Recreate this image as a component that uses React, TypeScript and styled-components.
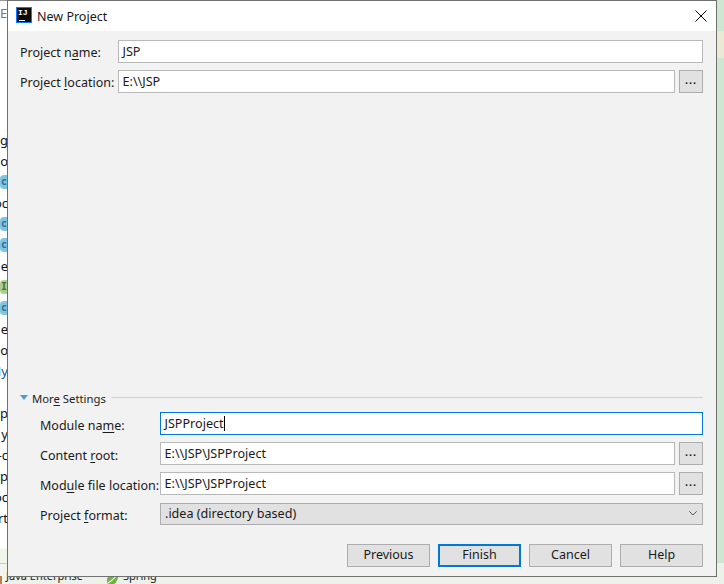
import styled, { createGlobalStyle } from "styled-components";

const GUTTER_ROWS = [
  { text: "ng" }, { text: "o" }, { badge: "c" }, { text: "oc" },
  { badge: "c" }, { badge: "c" }, { text: "e" }, { badge: "I", green: true },
  { badge: "c" }, { text: "e" }, { text: "oo" }, { text: "My", blue: true },
  { text: "" }, { text: "p" }, { text: "y" }, { text: "-c" }, { text: "rp" },
  { text: "oc" }, { text: "rt" },
];

function Mnemonic({ children }: { children: string }) {
  return <U>{children}</U>;
}

function Dots() {
  return <DotsButton>...</DotsButton>;
}

function App() {
  return (
    <Page>
      <GlobalStyle />
      <Gutter>
        <GutterTop>E:</GutterTop>
        {GUTTER_ROWS.map((r, i) => (
          <GutterItem key={i} $blue={r.blue}>
            {r.badge ? <Badge $green={r.green}>{r.badge}</Badge> : r.text}
          </GutterItem>
        ))}
      </Gutter>
      <RightStrip />
      <BottomStrip>
        <ModuleIcon />
        <BottomLabel>Java Enterprise</BottomLabel>
        <Leaf viewBox="0 0 14 14">
          <path d="M13 1C12 9 9 13 5 13 2 13 1 11 1 8 1 4 5 2 13 1z" fill="#6db33f" />
          <path d="M2 11C5 9 8 7 10 4" fill="none" stroke="#fff" strokeWidth="1.2" />
        </Leaf>
        <BottomLabel>Spring</BottomLabel>
      </BottomStrip>
      <Dialog>
        <TitleBar>
          <Logo><LogoText>IJ</LogoText><LogoBar /></Logo>
          <Title>New Project</Title>
          <Close viewBox="0 0 12 12"><path d="M.5.5l11 11M11.5.5l-11 11" /></Close>
        </TitleBar>
        <Body>
          <Form>
            <Row>
              <Label $w={98} $drop={1}>Project n<Mnemonic>a</Mnemonic>me:</Label>
              <Field>JSP</Field>
            </Row>
            <Row>
              <Label $w={98} $drop={1}>Project <Mnemonic>l</Mnemonic>ocation:</Label>
              <Field>E:\\JSP</Field>
              <Dots />
            </Row>
          </Form>
          <More>
            <SectionHead>
              <Caret />
              <SectionTitle>Mor<Mnemonic>e</Mnemonic> Settings</SectionTitle>
              <Rule />
            </SectionHead>
            <Fields>
              <Row>
                <Label $w={120} $drop={3}>Module na<Mnemonic>m</Mnemonic>e:</Label>
                <Field $focused>JSPProject<CaretBar /></Field>
              </Row>
              <Row>
                <Label $w={120} $drop={3}>Content <Mnemonic>r</Mnemonic>oot:</Label>
                <Field>E:\\JSP\JSPProject</Field>
                <Dots />
              </Row>
              <Row>
                <Label $w={120} $drop={3}>Mod<Mnemonic>u</Mnemonic>le file location:</Label>
                <Field>E:\\JSP\JSPProject</Field>
                <Dots />
              </Row>
              <Row>
                <Label $w={120} $drop={3}>Project <Mnemonic>f</Mnemonic>ormat:</Label>
                <Select>
                  .idea (directory based)
                  <Chevron viewBox="0 0 8 5"><path d="M.3.3L4 4 7.7.3" /></Chevron>
                </Select>
              </Row>
            </Fields>
          </More>
          <Buttons>
            <Button>Previous</Button>
            <Button $primary>Finish</Button>
            <Button>Cancel</Button>
            <Button>Help</Button>
          </Buttons>
        </Body>
      </Dialog>
    </Page>
  );
}

export default App;

const GlobalStyle = createGlobalStyle`
  * {
    box-sizing: border-box;
  }
  body {
    margin: 0;
    font-family: "Noto Sans", "Open Sans", sans-serif;
    font-size: 13px;
    color: #1a1a1a;
  }
`;

const Page = styled.div`
  position: relative;
  width: 724px;
  height: 584px;
  overflow: hidden;
  display: flex;
  justify-content: space-between;
  background: #ecf1ea;
`;

const Gutter = styled.div`
  position: relative;
  flex: 0 0 8px;
  display: flex;
  flex-direction: column;
  height: 584px;
  padding-top: 128px;
  overflow: hidden;
  border-top: 1px solid #9a9a9a;
  background: linear-gradient(
    #fff 0,
    #fff 547px,
    #eef7e8 548px,
    #eef7e8 562px,
    #c8cbc6 562px,
    #c8cbc6 563px,
    #f3f5f1 563px
  );
`;

const GutterTop = styled.div`
  position: absolute;
  left: 0;
  top: 3px;
  font-size: 13px;
  color: #777;
`;

const GutterItem = styled.div<{ $blue?: boolean }>`
  flex: 0 0 21px;
  display: flex;
  justify-content: flex-end;
  align-items: center;
  font-size: 13px;
  white-space: nowrap;
  color: ${(p) => (p.$blue ? "#1c4f9c" : "#111")};
`;

const Badge = styled.span<{ $green?: boolean }>`
  display: flex;
  flex: 0 0 8px;
  height: 14px;
  padding-left: 1px;
  align-items: center;
  border-radius: 4px 0 0 4px;
  background: ${(p) => (p.$green ? "#a9d08e" : "#7cc6e4")};
  color: ${(p) => (p.$green ? "#4f6b3d" : "#3c6a87")};
  font-family: "DejaVu Sans Mono", monospace;
  font-size: 10px;
  font-weight: 700;
`;

const RightStrip = styled.div`
  flex: 0 0 8px;
  height: 563px;
  background: linear-gradient(
    #cfe6d2 0,
    #cfe6d2 31px,
    #ece8d6 31px,
    #ece8d6 58px,
    #cfe6d2 58px
  );
`;

const BottomStrip = styled.div`
  position: absolute;
  left: 0;
  top: 566px;
  display: flex;
  align-items: center;
  height: 20px;
`;

const ModuleIcon = styled.span`
  width: 2px;
  height: 9px;
  margin: 8px 4px 0 0;
  background: #b8834a;
`;

const BottomLabel = styled.span`
  font-size: 11px;
  line-height: 20px;
  color: #222;
`;

const Leaf = styled.svg`
  width: 14px;
  height: 14px;
  margin: 6px 3px 0 23px;
`;

const Dialog = styled.div`
  position: absolute;
  left: 7px;
  top: 0;
  width: 710px;
  height: 577px;
  display: flex;
  flex-direction: column;
  border: 1px solid #707070;
  background: #f2f2f2;
`;

const TitleBar = styled.div`
  display: flex;
  align-items: center;
  height: 30px;
  padding: 0 9px 0 8px;
  background: #fff;
`;

const Logo = styled.div`
  position: relative;
  width: 16px;
  height: 16px;
  margin-bottom: 2px;
  background: #0a0a0a;
  border: 1px solid #087cfa;
`;

const LogoText = styled.span`
  display: block;
  padding: 1px 0 0 1px;
  font-family: "Liberation Mono", monospace;
  font-size: 8px;
  font-weight: 700;
  line-height: 8px;
  color: #fff;
`;

const LogoBar = styled.span`
  position: absolute;
  left: 2px;
  bottom: 1px;
  width: 6px;
  height: 1px;
  background: #fff;
`;

const Title = styled.span`
  margin-left: 5px;
  font-size: 12.5px;
  color: #1a1a1a;
`;

const Close = styled.svg`
  width: 12px;
  height: 12px;
  margin-left: auto;
  fill: none;
  stroke: #000;
  stroke-width: 1;
`;

const Body = styled.div`
  flex: 1;
  display: flex;
  flex-direction: column;
  padding: 9px 13px 9px 12px;
`;

const Form = styled.div`
  display: flex;
  flex-direction: column;
  gap: 7px;
`;

const Row = styled.div`
  display: flex;
  align-items: center;
  gap: 4px;
  height: 23px;
`;

const Label = styled.label<{ $w: number; $drop: number }>`
  flex: 0 0 ${(p) => p.$w}px;
  margin-right: -4px;
  padding-top: ${(p) => p.$drop}px;
  font-size: 12.5px;
  white-space: nowrap;
  color: #1a1a1a;
`;

const U = styled.span`
  text-decoration: underline;
  text-underline-offset: 2px;
`;

const Field = styled.div<{ $focused?: boolean }>`
  flex: 1;
  display: flex;
  align-items: center;
  height: 23px;
  padding-left: 3.5px;
  background: #fff;
  border: 1px solid ${(p) => (p.$focused ? "#0078d7" : "#b9b9b9")};
  font-size: 12.6px;
  color: #1a1a1a;
`;

const CaretBar = styled.span`
  width: 1px;
  height: 15px;
  background: #000;
`;

const DotsButton = styled.div`
  flex: 0 0 24px;
  height: 23px;
  text-align: center;
  line-height: 19px;
  background: #e1e1e1;
  border: 1px solid #adadad;
  font-family: "Liberation Sans", sans-serif;
  font-size: 11px;
  font-weight: 700;
  letter-spacing: 1px;
  color: #222;
`;

const More = styled.div`
  margin-top: auto;
  display: flex;
  flex-direction: column;
`;

const SectionHead = styled.div`
  display: flex;
  align-items: center;
  height: 14px;
`;

const Caret = styled.span`
  width: 0;
  height: 0;
  margin-right: 4px;
  border-left: 4px solid transparent;
  border-right: 4px solid transparent;
  border-top: 5px solid #4d9ad4;
`;

const SectionTitle = styled.span`
  padding-top: 2px;
  font-size: 11.3px;
  color: #222;
`;

const Rule = styled.span`
  flex: 1;
  height: 1px;
  margin-left: 5px;
  background: #d0d0d0;
`;

const Fields = styled.div`
  display: flex;
  flex-direction: column;
  gap: 7px;
  margin-top: 8px;
  padding-left: 20px;
`;

const Select = styled.div`
  flex: 1;
  display: flex;
  align-items: center;
  justify-content: space-between;
  height: 22px;
  padding: 0 5px 0 4px;
  background: #e1e1e1;
  border: 1px solid #adadad;
  font-size: 12.6px;
  color: #1a1a1a;
`;

const Chevron = styled.svg`
  width: 8px;
  height: 5px;
  fill: none;
  stroke: #555;
  stroke-width: 1;
`;

const Buttons = styled.div`
  display: flex;
  justify-content: flex-end;
  gap: 8px;
  margin-top: 19px;
`;

const Button = styled.button<{ $primary?: boolean }>`
  width: 83px;
  height: 23px;
  padding: 0 0 2px;
  background: #e1e1e1;
  border: ${(p) => (p.$primary ? "2px solid #0078d7" : "1px solid #adadad")};
  font-family: inherit;
  font-size: 12.5px;
  color: #1a1a1a;
`;
